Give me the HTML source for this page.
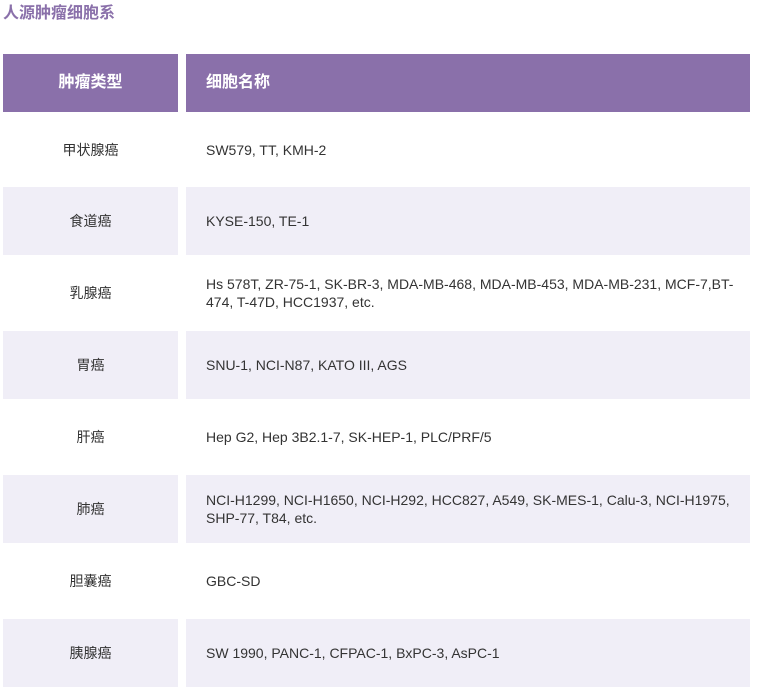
<!DOCTYPE html>
<html><head><meta charset="utf-8"><style>
body{margin:0;background:#fff;font-family:"Liberation Sans","Noto Sans CJK SC",sans-serif;color:#333;}
h3{position:absolute;left:3px;top:4px;margin:0;font-size:16px;color:#8a70aa;font-weight:bold;line-height:20px;}
table{position:absolute;left:-5px;top:50px;border-collapse:separate;border-spacing:8px 4px;width:763px;}
td,th{font-size:14px;line-height:18px;}
th{background:#8a70aa;color:#fff;height:58px;font-size:16px;padding:0;}
th.a{width:175px;text-align:center;}
th.b{text-align:left;padding-left:20px;}
td{height:68px;padding:0;}
td.a{text-align:center;width:175px;}
td.b{padding:0 14px 0 20px;}
tr.s td{background:#f0eef7;}
tr.f td{height:67px;}
</style></head><body>
<h3>人源肿瘤细胞系</h3>
<table>
<tr><th class="a">肿瘤类型</th><th class="b">细胞名称</th></tr>
<tr class="f"><td class="a">甲状腺癌</td><td class="b">SW579, TT, KMH-2</td></tr>
<tr class="s"><td class="a">食道癌</td><td class="b">KYSE-150, TE-1</td></tr>
<tr><td class="a">乳腺癌</td><td class="b">Hs 578T, ZR-75-1, SK-BR-3, MDA-MB-468, MDA-MB-453, MDA-MB-231, MCF-7,BT-474, T-47D, HCC1937, etc.</td></tr>
<tr class="s"><td class="a">胃癌</td><td class="b">SNU-1, NCI-N87, KATO III, AGS</td></tr>
<tr><td class="a">肝癌</td><td class="b">Hep G2, Hep 3B2.1-7, SK-HEP-1, PLC/PRF/5</td></tr>
<tr class="s"><td class="a">肺癌</td><td class="b">NCI-H1299, NCI-H1650, NCI-H292, HCC827, A549, SK-MES-1, Calu-3, NCI-H1975, SHP-77, T84, etc.</td></tr>
<tr><td class="a">胆囊癌</td><td class="b">GBC-SD</td></tr>
<tr class="s"><td class="a">胰腺癌</td><td class="b">SW 1990, PANC-1, CFPAC-1, BxPC-3, AsPC-1</td></tr>
</table>
</body></html>
